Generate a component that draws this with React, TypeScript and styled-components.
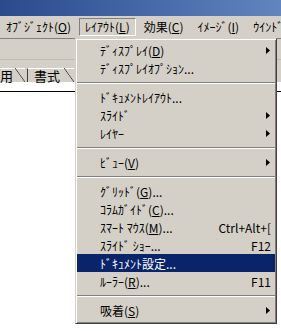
import React from "react"
import styled, { createGlobalStyle, css } from "styled-components"

type Entry =
    | { kind: "sep" }
    | { kind: "item"; label: string; shortcut?: string; sub?: boolean; active?: boolean }

const sep: Entry = { kind: "sep" }

const entries: Entry[] = [
    { kind: "item", label: "ﾃﾞｨｽﾌﾟﾚｲ(&D)", sub: true },
    { kind: "item", label: "ﾃﾞｨｽﾌﾟﾚｲｵﾌﾟｼｮﾝ..." },
    sep,
    { kind: "item", label: "ﾄﾞｷｭﾒﾝﾄﾚｲｱｳﾄ..." },
    { kind: "item", label: "ｽﾗｲﾄﾞ", sub: true },
    { kind: "item", label: "ﾚｲﾔｰ", sub: true },
    sep,
    { kind: "item", label: "ﾋﾞｭｰ(&V)", sub: true },
    sep,
    { kind: "item", label: "ｸﾞﾘｯﾄﾞ(&G)..." },
    { kind: "item", label: "ｺﾗﾑｶﾞｲﾄﾞ(&C)..." },
    { kind: "item", label: "ｽﾏｰﾄ ﾏｳｽ(&M)...", shortcut: "Ctrl+Alt+[" },
    { kind: "item", label: "ｽﾗｲﾄﾞ ｼｮｰ...", shortcut: "F12" },
    { kind: "item", label: "ﾄﾞｷｭﾒﾝﾄ設定...", active: true },
    { kind: "item", label: "ﾙｰﾗｰ(&R)...", shortcut: "F11" },
    sep,
    { kind: "item", label: "吸着(&S)", sub: true },
]

const menuBar = [
    { label: "ｵﾌﾞｼﾞｪｸﾄ(&O)" },
    { label: "ﾚｲｱｳﾄ(&L)", pressed: true },
    { label: "効果(&C)" },
    { label: "ｲﾒｰｼﾞ(&I)" },
    { label: "ｳｲﾝﾄﾞｳ(&W)" },
]

// "&X" marks the mnemonic letter
const Mnemonic: React.FC<{ text: string }> = ({ text }) => {
    const i = text.indexOf("&")
    if (i < 0) return <>{text}</>
    return (
        <>
            {text.slice(0, i)}
            <u>{text[i + 1]}</u>
            {text.slice(i + 2)}
        </>
    )
}

const App: React.FC = () => {
    return (
        <>
            <GlobalStyle />
            <Page>
                <TitleBar />
                <MenuBar>
                    {menuBar.map(({ label, pressed }) => (
                        <BarItem key={label} $pressed={!!pressed}>
                            <Mnemonic text={label} />
                        </BarItem>
                    ))}
                </MenuBar>
                <Toolbar />
                <TabStrip>
                    <Tab $first>用</Tab>
                    <Tab>書式</Tab>
                </TabStrip>
                <DocArea>
                    <RulerLine />
                </DocArea>

                <DropMenu>
                    {entries.map((e, i) =>
                        e.kind === "sep" ? (
                            <Separator key={i} />
                        ) : (
                            <MenuItem key={i} $active={!!e.active}>
                                <Label>
                                    <Mnemonic text={e.label} />
                                </Label>
                                {e.shortcut && <Shortcut>{e.shortcut}</Shortcut>}
                                {e.sub && (
                                    <Arrow viewBox="0 0 4 7">
                                        <polygon points="0,0 4,3.5 0,7" />
                                    </Arrow>
                                )}
                            </MenuItem>
                        )
                    )}
                </DropMenu>
            </Page>
        </>
    )
}

const GlobalStyle = createGlobalStyle`
    html, body {
        margin: 0;
        padding: 0;
        background: #fff;
    }
    body {
        font-family: "Noto Sans CJK JP", "Noto Sans", sans-serif;
        font-size: 12px;
        color: #000;
    }
`

const Page = styled.div`
    position: relative;
    width: 281px;
    height: 331px;
    overflow: hidden;
    background: #fff;
`

const TitleBar = styled.div`
    height: 16px;
    background: linear-gradient(to right, #2a4a8c, #6284bf);
`

const MenuBar = styled.div`
    display: flex;
    align-items: center;
    gap: 2px;
    height: 22px;
    background: #d4d0c8;
    white-space: nowrap;
`

const BarItem = styled.div<{ $pressed: boolean }>`
    height: 16px;
    line-height: 16px;
    padding: 0 5px;
    border: 1px solid transparent;
    ${({ $pressed }) =>
        $pressed &&
        css`
            border-color: #808080 #fff #fff #808080;
        `}
`

const Toolbar = styled.div`
    height: 20px;
    background: #d4d0c8;
    border-top: 1px solid #808080;
    border-bottom: 1px solid #c0bcb4;
`

const TabStrip = styled.div`
    display: flex;
    align-items: flex-end;
    gap: 2px;
    height: 22px;
    background: #d4d0c8;
`

const Tab = styled.div<{ $first?: boolean }>`
    position: relative;
    height: 13px;
    line-height: 13px;
    font-size: 13px;
    padding: 0 14px 0 6px;
    border-top: 1px solid #fff;
    border-left: 1px solid #404040;
    ${({ $first }) =>
        $first &&
        css`
            margin-left: -7px;
            padding-right: 12px;
        `}

    &::after {
        content: "";
        position: absolute;
        right: 0;
        top: -1px;
        width: 10px;
        height: 14px;
        background: linear-gradient(
            to top right,
            transparent calc(50% - 0.7px),
            #404040 50%,
            transparent calc(50% + 0.7px)
        );
    }
`

const DocArea = styled.div`
    padding-top: 9px;
    background: #fff;
`

const RulerLine = styled.div`
    border-top: 1px solid #000;
`

const DropMenu = styled.div`
    position: absolute;
    left: 75px;
    top: 38px;
    width: 198px;
    padding: 2px 1px 4px;
    background: #d4d0c8;
    border: 1px solid;
    border-color: #d4d0c8 #404040 #404040 #d4d0c8;
    box-shadow: inset 1px 1px #fff, inset -1px -1px #808080;
`

const MenuItem = styled.div<{ $active: boolean }>`
    display: flex;
    align-items: center;
    height: 18px;
    padding: 0 4px 0 23px;
    white-space: nowrap;
    ${({ $active }) =>
        $active &&
        css`
            background: #0a246a;
            color: #fff;
        `}
`

const Label = styled.span`
    flex: 1;
`

const Shortcut = styled.span`
    margin-left: 12px;
`

const Arrow = styled.svg`
    width: 4px;
    height: 7px;
    margin-right: 1px;
    fill: currentColor;
`

const Separator = styled.div`
    margin: 5px 0 4px;
    height: 0;
    border-top: 1px solid #808080;
    border-bottom: 1px solid #fff;
`

export default App
